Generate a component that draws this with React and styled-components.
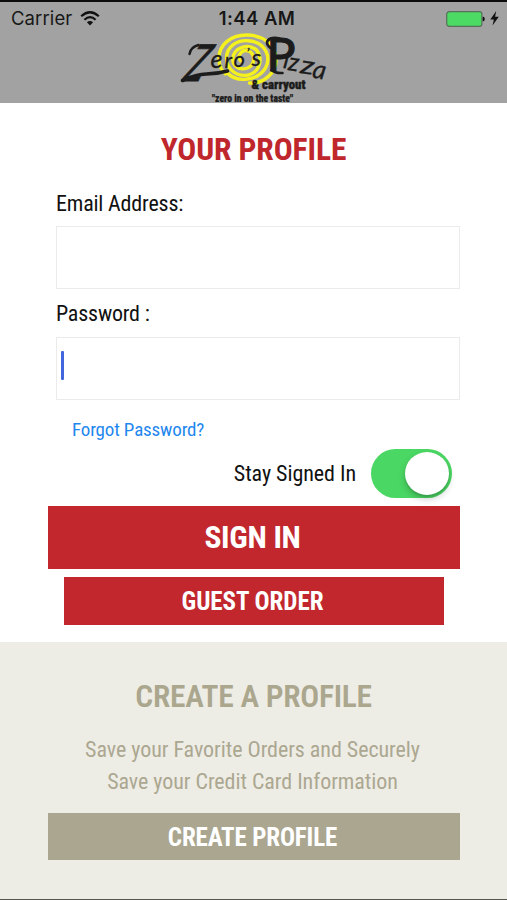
import React, { useState } from "react";
import styled, { createGlobalStyle } from "styled-components";

const GlobalStyle = createGlobalStyle`
  *, *::before, *::after { box-sizing: border-box; }
  body { margin: 0; background: #fff; }
  button { font: inherit; letter-spacing: inherit; border: 0; margin: 0; padding: 0; background: none; }
`;

const Screen = styled.main`
  display: flex;
  flex-direction: column;
  width: 507px;
  height: 900px;
  overflow: hidden;
  background: #fff;
  border-bottom: 1px solid #55554f;
  font-family: "Roboto Condensed", Roboto, sans-serif;
  font-weight: 450;
  color: #111;
`;

const Header = styled.header`
  display: flex;
  flex-direction: column;
  align-items: center;
  flex: none;
  height: 103px;
  background: #a2a2a2;
  border-top: 2px solid #0c0c0c;
`;

const StatusBar = styled.div`
  display: grid;
  grid-template-columns: 1fr auto 1fr;
  align-items: center;
  align-self: stretch;
  flex: none;
  height: 31px;
  padding: 1px 8px 0 11px;
  font: 400 18.5px/31px Inter, sans-serif;
  color: #171717;
`;

const Carrier = styled.div`
  display: flex;
  align-items: center;
  gap: 8px;
  letter-spacing: 0.1px;
`;

const Clock = styled.time`
  font-weight: 600;
  letter-spacing: 0.45px;
  padding-left: 4px;
`;

const Power = styled.div`
  display: flex;
  align-items: center;
  justify-content: flex-end;
  gap: 5px;
`;

const Logo = styled.svg`
  flex: none;
  display: block;
  overflow: visible;
`;

const Form = styled.section`
  display: flex;
  flex-direction: column;
  flex: none;
  height: 539px;
  padding: 27px 47px 0 48px;
`;

const Title = styled.h1`
  margin: 0;
  padding-right: 1px;
  text-align: center;
  font-size: 31.5px;
  line-height: 40px;
  font-weight: ${(p) => p.$weight || 700};
  letter-spacing: ${(p) => p.$spacing};
  color: ${(p) => p.$color};
`;

const Field = styled.label`
  display: flex;
  flex-direction: column;
  margin: ${(p) => p.$top} 0 0 8px;
  font-size: 22px;
  line-height: 30px;
  letter-spacing: ${(p) => p.$spacing};
`;

const InputBox = styled.span`
  display: flex;
  align-items: center;
  height: 63px;
  margin-top: ${(p) => p.$gap};
  padding: 0 0 6px 4px;
  border: 1.5px solid #ebebeb;
  background: #fff;
`;

const Caret = styled.span`
  width: 3px;
  height: 29px;
  border-radius: 1px;
  background: #4266dc;
`;

const Forgot = styled.a`
  align-self: flex-start;
  margin: 17px 0 0 24px;
  font-size: 19px;
  line-height: 25px;
  color: #1f88ee;
  letter-spacing: -0.16px;
`;

const StayRow = styled.div`
  display: flex;
  align-items: center;
  justify-content: flex-end;
  gap: 15px;
  height: 49px;
  margin-top: 7px;
  padding-right: 8px;
  font-size: 22px;
  letter-spacing: -0.05px;
`;

const Switch = styled.button`
  display: flex;
  justify-content: ${(p) => (p.$on ? "flex-end" : "flex-start")};
  width: 81px;
  height: 49px;
  padding: 3px;
  border-radius: 25px;
  background: ${(p) => (p.$on ? "#4bd763" : "#ddd")};
`;

const Knob = styled.span`
  width: 44px;
  height: 43px;
  border-radius: 50%;
  background: #fff;
  box-shadow: 0 4px 7px rgba(0, 0, 0, 0.2), 0 2px 2px rgba(0, 0, 0, 0.1);
`;

const Action = styled.button`
  flex: none;
  height: ${(p) => p.$height};
  margin: ${(p) => p.$margin};
  padding: 1px 3px 0 0;
  background: ${(p) => p.$fill};
  color: #fff;
  font-weight: 700;
  font-size: ${(p) => p.$size};
  line-height: 1;
  letter-spacing: ${(p) => p.$spacing};
`;

const Create = styled.section`
  display: flex;
  flex-direction: column;
  flex: 1;
  padding: 35px 47px 0 48px;
  background: #eeede5;
`;

const Blurb = styled.p`
  margin: 17px 0 0;
  text-align: center;
  font-size: 22px;
  line-height: 32px;
  letter-spacing: -0.05px;
  padding-right: 3px;
  color: #aba791;
`;

function WifiIcon() {
  return (
    <svg width="20" height="15" viewBox="0 0 20 15" fill="none" stroke="#111" strokeWidth="2.2">
      <path d="M1.2 5.2 Q10 -2.7 18.8 5.2" />
      <path d="M4.4 8.7 Q10 3.6 15.6 8.7" />
      <path d="M6.9 11.3 Q10 8.6 13.1 11.3 L10 14.5 Z" fill="#111" stroke="none" />
    </svg>
  );
}

function BatteryIcon() {
  return (
    <svg width="39" height="16" viewBox="0 0 39 16">
      <rect x="0.7" y="0.7" width="35.2" height="14.6" rx="2.6" fill="#4cd964" stroke="#58705b" strokeWidth="1.2" />
      <path d="M36.7 5.4 Q38.8 5.6 38.8 8 Q38.8 10.4 36.7 10.6Z" fill="#111" />
    </svg>
  );
}

function BoltIcon() {
  return (
    <svg width="9" height="15" viewBox="0 0 9 15">
      <path d="M6.2 0 L0.3 8.4 H3.9 L2.5 14.6 L8.8 5.7 H5.1 Z" fill="#111" />
    </svg>
  );
}

function ZerosLogo() {
  return (
    <Logo width="148" height="70" viewBox="180.5 33 148 70">
      <g fill="none" stroke="#f5f11d" strokeWidth="3.4" strokeLinecap="round">
        <path d="M250 83 C264 84 277 73 276.500 59 C276 44 263 35 247 35 C231 35 219.500 45 219.500 58 C219.500 66 222 71 226 74" />
        <path d="M228 73 C237 83 258 81 266 68 C272 57 266 43 251 41 C237 39 227 47 227 58 C227 70 238 77 249 75 C260 72 264 59 257 50" />
        <path d="M257 50 C250 44 238 46 234 55 C231 65 239 71 248 68 C256 65 256 54 249 51 C242 49 237 56 241 61" />
      </g>
      <g fill="none" stroke="#1c1c1c" strokeLinecap="round" strokeLinejoin="round">
        <path d="M190 54 Q191 47 199 45" strokeWidth="2.4" />
        <path d="M183 80.5 Q197 74 207 74 T228 71" strokeWidth="3.6" />
        <path d="M271 48 Q264 42 271 38.5 Q275 37 280 38.500" strokeWidth="2.6" />
        <path d="M272 70 Q276 73.5 283 73" strokeWidth="2.6" />
      </g>
      <g fill="#1c1c1c" stroke="#1c1c1c" strokeWidth="0.3" fontFamily="Lato, sans-serif" fontStyle="italic">
        <text transform="translate(181 80.5) skewX(-26)" fontStyle="normal" fontSize="51" strokeWidth="0.8" textLength="19" lengthAdjust="spacingAndGlyphs">Z</text>
        <text x="211" y="68" fontSize="25">e</text>
        <text x="225" y="68" fontSize="22">r</text>
        <text x="234" y="67" fontSize="22">o</text>
        <text x="247" y="58" fontSize="14">’</text>
        <text x="252" y="66" fontSize="24">s</text>
        <text x="267" y="71" fontStyle="normal" fontSize="46" strokeWidth="1" textLength="29" lengthAdjust="spacingAndGlyphs">P</text>
        <text transform="translate(283 68) rotate(8)" fontSize="24">ı</text>
        <text transform="translate(288 70) rotate(8)" fontSize="25">z</text>
        <text transform="translate(300 73) rotate(8)" fontSize="25" textLength="14" lengthAdjust="spacingAndGlyphs">z</text>
        <text transform="translate(312 77.500) rotate(10)" fontSize="26">a</text>
      </g>
      <g fill="#1c1c1c" stroke="#1c1c1c" strokeWidth="0.4" fontFamily="Roboto Condensed, sans-serif" fontWeight="900">
        <text x="252" y="88.5" fontSize="13" textLength="54" lengthAdjust="spacingAndGlyphs">&amp; carryout</text>
        <text x="212.5" y="101.800" fontSize="10.5" strokeWidth="0.2" textLength="81" lengthAdjust="spacingAndGlyphs">"zero in on the taste"</text>
      </g>
    </Logo>
  );
}

export default function App() {
  const [stay, setStay] = useState(true);
  return (
    <Screen>
      <GlobalStyle />
      <Header>
        <StatusBar>
          <Carrier>Carrier <WifiIcon /></Carrier>
          <Clock>1:44 AM</Clock>
          <Power><BatteryIcon /><BoltIcon /></Power>
        </StatusBar>
        <ZerosLogo />
      </Header>
      <Form>
        <Title $color="#bf272d" $spacing="-0.1px">YOUR PROFILE</Title>
        <Field $top="19px" $spacing="-0.18px">
          Email Address:
          <InputBox $gap="7px" />
        </Field>
        <Field $top="10px" $spacing="-0.2px">
          Password :
          <InputBox $gap="8px"><Caret /></InputBox>
        </Field>
        <Forgot>Forgot Password?</Forgot>
        <StayRow>
          Stay Signed In
          <Switch type="button" role="switch" aria-checked={stay} aria-label="Stay Signed In" $on={stay} onClick={() => setStay(!stay)}>
            <Knob />
          </Switch>
        </StayRow>
        <Action $height="63px" $margin="8px 0 0" $fill="#c1272d" $size="31.5px" $spacing="-0.3px">SIGN IN</Action>
        <Action $height="48px" $margin="8px 16px 0" $fill="#c1272d" $size="25px" $spacing="-0.05px">GUEST ORDER</Action>
      </Form>
      <Create>
        <Title as="h2" $weight={650} $color="#aba78f" $spacing="-0.3px">CREATE A PROFILE</Title>
        <Blurb>Save your Favorite Orders and Securely<br />Save your Credit Card Information</Blurb>
        <Action $height="47px" $margin="15px 0 0" $fill="#aba690" $size="25px" $spacing="-0.15px">CREATE PROFILE</Action>
      </Create>
    </Screen>
  );
}
